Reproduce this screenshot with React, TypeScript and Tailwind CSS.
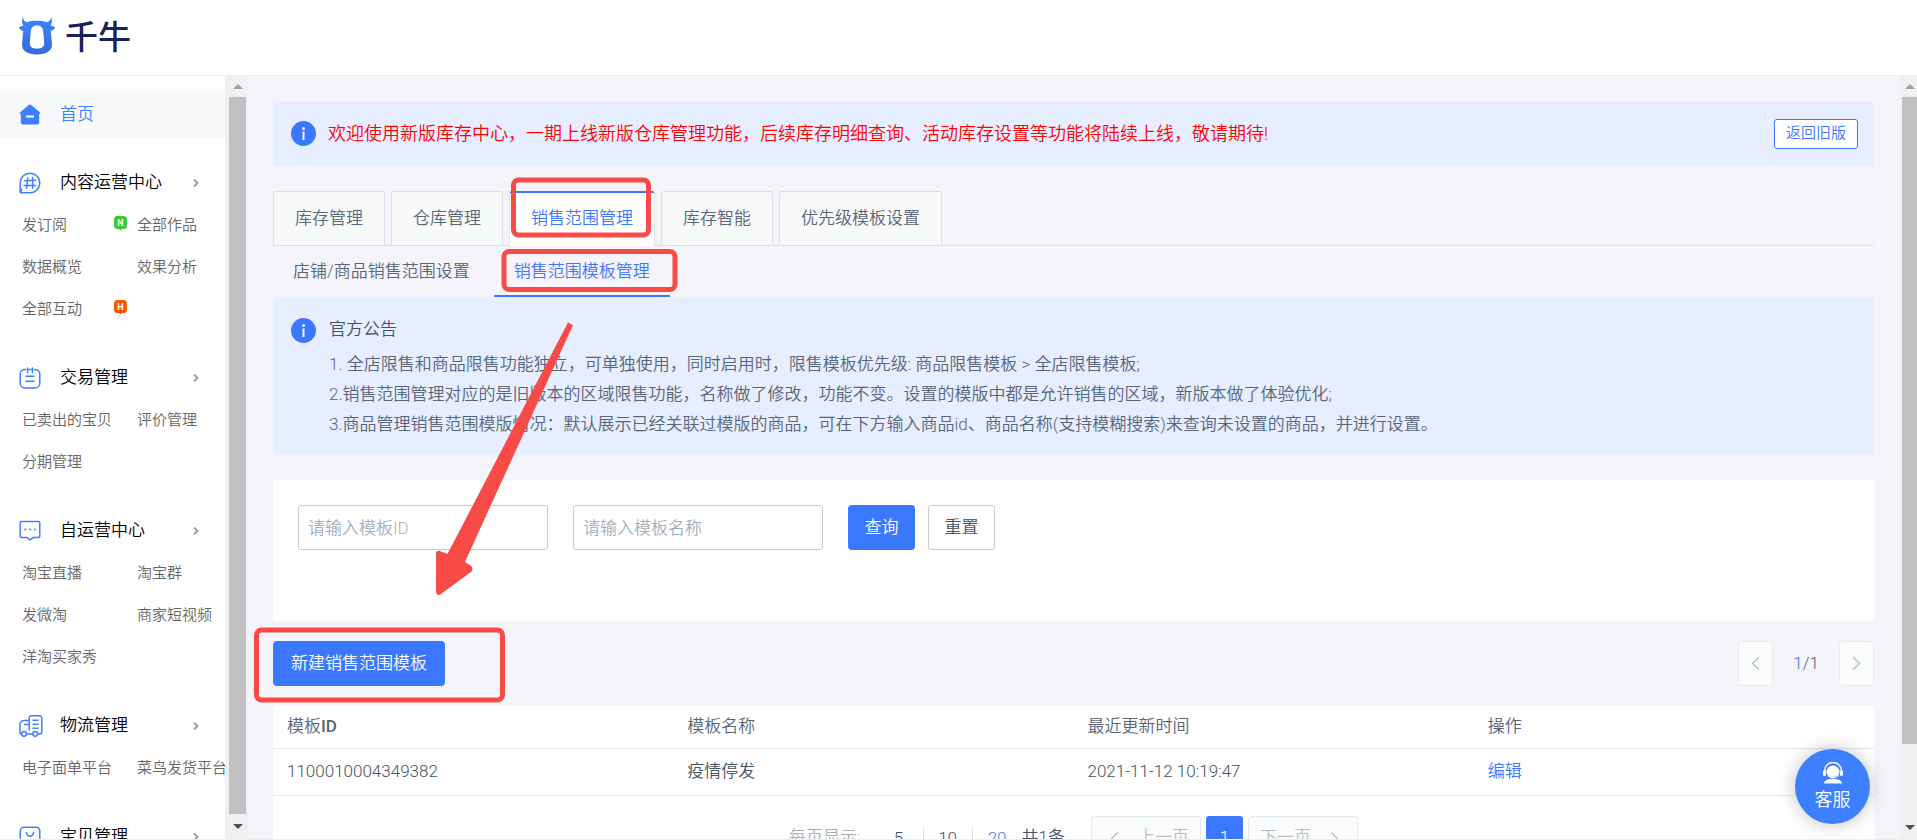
import React, { useState } from "react";
import { ChevronLeft, ChevronRight } from "lucide-react";

type Badge = "N" | "H";

interface MenuLink {
    label: string;
    badge?: Badge;
}

interface MenuGroup {
    title: string;
    icon: React.ReactNode;
    links: MenuLink[];
}

const iconProps = {
    width: 22,
    height: 22,
    viewBox: "0 0 22 22",
    fill: "none",
    stroke: "#3d7fff",
    strokeWidth: 1.5,
    strokeLinecap: "round" as const,
    strokeLinejoin: "round" as const,
    "aria-hidden": true
};

const HashIcon = () => (
    <svg {...iconProps}>
        <path d="M1.2 20.6V11A9.8 9.8 0 1 1 11 20.8H3.2c-1 0-1.6-.4-1.2-1.4l.8-2.2" />
        <path d="M8.8 6 7.6 16.2M13.6 5.6V16.2M5.4 8.8l11.2-.6M5 13.4h11.6" />
    </svg>
);

const OrderIcon = () => (
    <svg {...iconProps}>
        <path d="M6.6 2.4H6A4.8 4.8 0 0 0 1.2 7.2v9A4.8 4.8 0 0 0 6 21h10a4.8 4.8 0 0 0 4.8-4.8v-9A4.8 4.8 0 0 0 16 2.4h-.6M8.6 1v4.6M13.4 1v4.6M10.2 2.4h1.6M7 9.2h8M7 14.2h8" />
    </svg>
);

const ChatIcon = () => (
    <svg {...iconProps}>
        <path d="M3 1.6h16a1.8 1.8 0 0 1 1.8 1.8v12.4a1.8 1.8 0 0 1-1.8 1.8h-5l-3 2.4-3-2.4H3a1.8 1.8 0 0 1-1.8-1.8V3.4A1.8 1.8 0 0 1 3 1.6Z" />
        <path d="M6.2 9.6h.1M11 9.6h.1M15.8 9.6h.1" strokeWidth="2" />
    </svg>
);

const TruckIcon = () => (
    <svg {...iconProps} width={24} viewBox="0 0 24 22">
        <path d="M2.4 19H2a1 1 0 0 1-1-1v-8.4a4 4 0 0 1 4-4h5.2M7.6 19h6M10.2 15V3a2.2 2.2 0 0 1 2.2-2.2h8.2A2.2 2.2 0 0 1 22.8 3v13.8A2.2 2.2 0 0 1 20.6 19h-1.4M5.6 9.6h4.6" />
        <path d="M14 5.2h5M14 9.2h5M14 13.2h5" />
        <circle cx="5" cy="18.8" r="2.4" />
        <circle cx="16.2" cy="18.8" r="2.4" />
    </svg>
);

const GoodsIcon = () => (
    <svg {...iconProps}>
        <rect x="1.2" y="1.2" width="19.6" height="19.6" rx="4" />
        <path d="M7.4 6.4c.4 2.4 1.8 3.8 3.6 3.8s3.2-1.4 3.6-3.8" />
    </svg>
);

const HomeIcon = () => (
    <svg width="22" height="22" viewBox="0 0 22 22" aria-hidden="true">
        <path
            d="M10 .8a1.700 1.700 0 0 1 2 0l8.800 7.400c.9.800.4 1.800-.6 1.800v8.600c0 1-.8 1.800-1.800 1.800H3.600c-1 0-1.800-.8-1.800-1.800V10c-1 0-1.500-1-.6-1.800L10 .8Z"
            fill="#3d7fff"
        />
        <path d="M7 12.500h8" stroke="#fff" strokeWidth="2" />
    </svg>
);

const menuGroups: MenuGroup[] = [
    {
        title: "内容运营中心",
        icon: <HashIcon />,
        links: [
            { label: "发订阅", badge: "N" },
            { label: "全部作品" },
            { label: "数据概览" },
            { label: "效果分析" },
            { label: "全部互动", badge: "H" }
        ]
    },
    {
        title: "交易管理",
        icon: <OrderIcon />,
        links: [{ label: "已卖出的宝贝" }, { label: "评价管理" }, { label: "分期管理" }]
    },
    {
        title: "自运营中心",
        icon: <ChatIcon />,
        links: [
            { label: "淘宝直播" },
            { label: "淘宝群" },
            { label: "发微淘" },
            { label: "商家短视频" },
            { label: "洋淘买家秀" }
        ]
    },
    {
        title: "物流管理",
        icon: <TruckIcon />,
        links: [{ label: "电子面单平台" }, { label: "菜鸟发货平台" }]
    },
    {
        title: "宝贝管理",
        icon: <GoodsIcon />,
        links: []
    }
];

const mainTabs = ["库存管理", "仓库管理", "销售范围管理", "库存智能", "优先级模板设置"];
const subTabs = ["店铺/商品销售范围设置", "销售范围模板管理"];

const rows = [{ id: "1100010004349382", name: "疫情停发", updated: "2021-11-12 10:19:47" }];

const Logo = () => (
    <a href="#" className="flex items-center gap-[10px] pl-[19px]">
        <svg width="36" height="38" viewBox="0 0 36 38" aria-hidden="true">
            <defs>
                <linearGradient id="ox" x1="0" y1="0" x2="0" y2="1">
                    <stop offset="0" stopColor="#3d86ff" />
                    <stop offset="1" stopColor="#356bdc" />
                </linearGradient>
            </defs>
            <path
                fill="url(#ox)"
                fillRule="evenodd"
                d="M4 0c.2 3 1.600 4.600 4 5.200C11 4.200 14 3.800 18 3.800s7 .4 10 1.400c2.400-.6 3.800-2.200 4-5.200 1.400 3 1.400 5.800-.4 8.400L36 10c-.6 2.400-2 3.600-4.200 3.800L33 28c0 5.600-5.600 9.400-15 9.400S3 33.600 3 28l1.200-14.200C2 13.600.6 12.400 0 10l4.400-1.600C2.600 5.800 2.600 3 4 0Zm14 8.400c-3.600 0-5.800 2-6.200 5.800L10.800 26c-.2 4 2.600 5.600 7.200 5.600s7.400-1.600 7.200-5.600l-1-11.800c-.4-3.800-2.600-5.800-6.200-5.800Z"
            />
        </svg>
        <span className="pt-1 text-[33px] leading-[38px] font-medium text-[#16215a]">千牛</span>
    </a>
);

const MenuBadge = ({ kind }: { kind: Badge }) => (
    <svg width="13" height="15" viewBox="0 0 13 15" className="mr-[10px] -mt-1 shrink-0" role="img">
        <path
            d="M3.500 0h6A3.500 3.500 0 0 1 13 3.500v6A3.500 3.500 0 0 1 9.500 13H8l-1.500 1.500L5 13H3.500A3.500 3.500 0 0 1 0 9.500v-6A3.500 3.500 0 0 1 3.500 0Z"
            fill={kind === "N" ? "#33cc33" : "#ff5500"}
        />
        <text x="6.500" y="10" fontSize="9" fontWeight="700" textAnchor="middle" fill="#fff">
            {kind}
        </text>
    </svg>
);

const InfoIcon = () => (
    <svg width="25" height="25" viewBox="0 0 25 25" className="shrink-0" aria-hidden="true">
        <circle cx="12.500" cy="12.500" r="12.500" fill="#3b77ff" />
        <circle cx="12.500" cy="7.500" r="1.500" fill="#fff" />
        <path d="M12.500 10.500v8.500" stroke="#fff" strokeWidth="2" />
    </svg>
);

const Scrollbar = ({ side }: { side: "menu" | "page" }) => (
    <div
        aria-hidden="true"
        className={
            side === "menu"
                ? "flex w-[23px] shrink-0 flex-col bg-[#f0f0f0] pr-[2px] pl-1"
                : "flex w-[17px] shrink-0 flex-col bg-[#f0f0f0] pl-[2px]"
        }
    >
        <div className="flex h-[21px] shrink-0 items-center justify-center">
            <svg width="10" height="5" viewBox="0 0 10 5">
                <path d="M0 5 5 0l5 5Z" fill="#a3a3a3" />
            </svg>
        </div>
        <div className={side === "menu" ? "flex-1 bg-[#c1c1c1]" : "basis-[90%] bg-[#c1c1c1]"} />
        <div
            className={
                side === "menu"
                    ? "flex h-[25px] shrink-0 items-center justify-center"
                    : "flex h-[95px] shrink-0 items-end justify-center pb-[9px]"
            }
        >
            <svg width="10" height="5" viewBox="0 0 10 5">
                <path d="M0 0h10L5 5Z" fill="#505050" />
            </svg>
        </div>
    </div>
);

const Sidebar = () => (
    <nav className="w-[225px] shrink-0 overflow-hidden bg-white pt-[15px]">
        <a href="#" className="flex h-[47px] items-center bg-[#f7f9fb] pl-[19px] text-[#3d7fff]">
            <span className="w-[41px]">
                <HomeIcon />
            </span>
            首页
        </a>

        <div className="mt-6 flex flex-col gap-[27px]">
            {menuGroups.map((group) => (
                <section key={group.title}>
                    <h2 className="flex h-[42px] items-center pr-[26px] pl-[19px] text-black">
                        <span className="w-[41px]">{group.icon}</span>
                        <span className="flex-1">{group.title}</span>
                        <svg width="6" height="8" viewBox="0 0 6 8" fill="none" aria-hidden="true">
                            <path d="m1 0.500 3.500 3.500L1 7.500" stroke="#999" strokeWidth="1.800" />
                        </svg>
                    </h2>
                    <ul className="grid grid-cols-[115px_115px] pl-[22px]">
                        {group.links.map((link) => (
                            <li key={link.label} className="flex h-[42px] items-center justify-between">
                                <a href="#" className="text-[15px] whitespace-nowrap text-[#666]">
                                    {link.label}
                                </a>
                                {link.badge && <MenuBadge kind={link.badge} />}
                            </li>
                        ))}
                    </ul>
                </section>
            ))}
        </div>
    </nav>
);

const PagerArrow = ({ dir }: { dir: "prev" | "next" }) => (
    <button
        disabled
        aria-label={dir === "prev" ? "上一页" : "下一页"}
        className="flex h-[45px] w-[35px] items-center justify-center rounded-sm border border-[#e8eaf1] bg-[#fafcfb] text-[#b4bfcc]"
    >
        {dir === "prev" ? <ChevronLeft size={23} strokeWidth={1.5} /> : <ChevronRight size={23} strokeWidth={1.5} />}
    </button>
);

// Red marks that walk the reader through the three steps
const Annotations = () => (
    <svg width="700" height="720" viewBox="0 0 700 720" className="pointer-events-none absolute top-0 left-0" aria-hidden="true">
        <g fill="none" stroke="#f84b48" strokeWidth="5">
            <rect x="513.500" y="180" width="135" height="55" rx="5" />
            <rect x="504" y="251.500" width="171" height="38" rx="5" />
            <rect x="256.500" y="630" width="246" height="70" rx="5" />
        </g>
        <path
            d="M568 322.500 573 325 465 562l5.500 3.500c2.500 1.500 2.500 5 .5 6.500L441 594c-2.500 2-5 .5-5-2.500V554c0-3 2-4 4.500-2.800l7 2.800Z"
            fill="#f84b48"
        />
    </svg>
);

export default function App() {
    const [tab, setTab] = useState(2);
    const [subTab, setSubTab] = useState(1);
    const [templateId, setTemplateId] = useState("");
    const [templateName, setTemplateName] = useState("");

    const handleReset = () => {
        setTemplateId("");
        setTemplateName("");
    };

    return (
        <div className="relative flex h-screen flex-col overflow-hidden border-b border-[#ededed] bg-white font-['Roboto','Noto_Sans_CJK_SC',sans-serif] text-[17px] font-[350] text-[#586679]">
            {/* Header */}
            <header className="flex h-[76px] shrink-0 items-center border-b border-[#ebebeb] pb-1">
                <Logo />
            </header>

            <div className="flex min-h-0 flex-1">
                <Sidebar />
                <Scrollbar side="menu" />

                <main className="flex min-w-0 flex-1 flex-col overflow-hidden bg-[#f5f4fa] pt-[25px] pr-[26px] pl-[25px]">
                    {/* Upgrade notice */}
                    <div className="flex h-[65px] shrink-0 items-center rounded-sm bg-[#e7eeff] pr-4 pl-[18px]">
                        <InfoIcon />
                        <p className="flex-1 pl-3 text-lg text-[#f00]">
                            欢迎使用新版库存中心，一期上线新版仓库管理功能，后续库存明细查询、活动库存设置等功能将陆续上线，敬请期待!
                        </p>
                        <button className="h-[30px] rounded-[3px] border border-[#3b77ff] bg-white px-[11px] text-[15px] text-[#3b77ff]">
                            返回旧版
                        </button>
                    </div>

                    {/* Main tabs */}
                    <div role="tablist" className="mt-[25px] flex h-[55px] shrink-0 gap-[6px] border-b border-[#dddfe6]">
                        {mainTabs.map((label, i) => (
                            <button
                                key={label}
                                role="tab"
                                aria-selected={tab === i}
                                onClick={() => setTab(i)}
                                className={
                                    tab === i
                                        ? "-mb-px rounded-t-[3px] border-x border-t-2 border-x-[#e3e4ea] border-t-[#3b77ff] bg-white px-[21px] pb-[2px] text-[#3b77ff]"
                                        : "rounded-t-[3px] border border-b-0 border-[#dddfe6] bg-[#f8f9f9] px-[21px]"
                                }
                            >
                                {label}
                            </button>
                        ))}
                    </div>

                    {/* Sub tabs */}
                    <div role="tablist" className="flex h-[51px] shrink-0 gap-1">
                        {subTabs.map((label, i) => (
                            <button
                                key={label}
                                role="tab"
                                aria-selected={subTab === i}
                                onClick={() => setSubTab(i)}
                                className={
                                    subTab === i
                                        ? "border-b-2 border-[#3b77ff] px-5 pt-[2px] text-[#3b77ff]"
                                        : "border-b-2 border-transparent px-5 pt-[2px]"
                                }
                            >
                                {label}
                            </button>
                        ))}
                    </div>

                    {/* Announcement */}
                    <div className="flex shrink-0 items-start rounded-sm bg-[#e7eeff] pt-[17px] pb-4 pl-[18px]">
                        <div className="pt-1">
                            <InfoIcon />
                        </div>
                        <div className="pl-[13px] leading-[30px]">
                            <h3 className="mb-[5px] text-[#455366]">官方公告</h3>
                            <p>1. 全店限售和商品限售功能独立，可单独使用，同时启用时，限售模板优先级: 商品限售模板 &gt; 全店限售模板;</p>
                            <p>2.销售范围管理对应的是旧版本的区域限售功能，名称做了修改，功能不变。设置的模版中都是允许销售的区域，新版本做了体验优化;</p>
                            <p>3.商品管理销售范围模版情况：默认展示已经关联过模版的商品，可在下方输入商品id、商品名称(支持模糊搜索)来查询未设置的商品，并进行设置。</p>
                        </div>
                    </div>

                    {/* Search */}
                    <form
                        onSubmit={(e) => e.preventDefault()}
                        className="mt-[25px] flex h-[141px] shrink-0 items-start bg-white px-[25px] pt-[25px]"
                    >
                        <input
                            type="text"
                            aria-label="模板ID"
                            value={templateId}
                            onChange={(e) => setTemplateId(e.target.value)}
                            placeholder="请输入模板ID"
                            className="h-[45px] w-[250px] rounded-[3px] border border-[#c3ccd6] px-[9px] placeholder:text-[#a3b0bf]"
                        />
                        <input
                            type="text"
                            aria-label="模板名称"
                            value={templateName}
                            onChange={(e) => setTemplateName(e.target.value)}
                            placeholder="请输入模板名称"
                            className="ml-[25px] h-[45px] w-[250px] rounded-[3px] border border-[#c3ccd6] px-[9px] placeholder:text-[#a3b0bf]"
                        />
                        <button type="submit" className="ml-[25px] h-[45px] w-[67px] rounded-sm bg-[#3b77ff] text-white">
                            查询
                        </button>
                        <button
                            type="button"
                            onClick={handleReset}
                            className="ml-[13px] h-[45px] w-[67px] rounded-[3px] border border-[#c3ccd6] bg-white text-[#455366]"
                        >
                            重置
                        </button>
                    </form>

                    {/* Toolbar */}
                    <div className="flex shrink-0 items-center justify-between py-5">
                        <button className="h-[45px] w-[172px] rounded-sm bg-[#3b77ff] text-white">新建销售范围模板</button>
                        <div className="flex items-center">
                            <PagerArrow dir="prev" />
                            <span className="w-[66px] text-center">
                                <span className="text-[#3b77ff]">1</span>/1
                            </span>
                            <PagerArrow dir="next" />
                        </div>
                    </div>

                    {/* Template list */}
                    <div className="flex-1 bg-white">
                        <table className="w-full table-fixed text-left">
                            <thead>
                                <tr className="h-[42px] border-b border-[#e6e8f0]">
                                    <th className="px-[14px] font-[350]">
                                        模板<span className="font-medium">ID</span>
                                    </th>
                                    <th className="px-[14px] font-[350]">模板名称</th>
                                    <th className="px-[14px] font-[350]">最近更新时间</th>
                                    <th className="px-[14px] font-[350]">操作</th>
                                </tr>
                            </thead>
                            <tbody className="text-[#455366]">
                                {rows.map((row) => (
                                    <tr key={row.id} className="h-[47px] border-b border-[#e6e8f0]">
                                        <td className="px-[14px]">{row.id}</td>
                                        <td className="px-[14px]">{row.name}</td>
                                        <td className="px-[14px]">{row.updated}</td>
                                        <td className="px-[14px]">
                                            <a href="#" className="text-[#3b77ff]">
                                                编辑
                                            </a>
                                        </td>
                                    </tr>
                                ))}
                            </tbody>
                        </table>

                        <div className="flex h-[85px] items-center justify-center text-[#455366]">
                            <span className="pr-[14px] text-[#a3b0bf]">每页显示:</span>
                            <button className="h-5 w-[49px] border-r border-[#dddfe6] leading-5">5</button>
                            <button className="h-5 w-[49px] border-r border-[#dddfe6] leading-5">10</button>
                            <button className="h-5 w-[49px] leading-5 text-[#3b77ff]">20</button>
                            <span className="pr-[26px]">共1条</span>
                            <button
                                disabled
                                className="flex h-[45px] w-[110px] items-center justify-center gap-3 rounded-[3px] border border-[#e6e8f0] bg-[#fafcfb] text-[#b4bfcc]"
                            >
                                <ChevronLeft size={23} strokeWidth={1.5} />
                                上一页
                            </button>
                            <button className="mx-[5px] h-[45px] w-[37px] rounded-[3px] bg-[#3b77ff] text-white">1</button>
                            <button
                                disabled
                                className="flex h-[45px] w-[110px] items-center justify-center gap-3 rounded-[3px] border border-[#e6e8f0] bg-[#fafcfb] text-[#b4bfcc]"
                            >
                                下一页
                                <ChevronRight size={23} strokeWidth={1.5} />
                            </button>
                        </div>
                    </div>
                </main>

                <Scrollbar side="page" />
            </div>

            {/* Support button */}
            <button className="absolute right-[47px] bottom-[15px] flex size-[75px] flex-col items-center justify-center rounded-full bg-[#3d7fff] text-lg leading-6 text-white shadow-[0_0_18px_rgba(0,0,0,0.25)]">
                <svg width="20" height="22" viewBox="0 0 20 22" className="mb-1" aria-hidden="true">
                    <path d="M1.500 10V9a8.500 8.500 0 0 1 17 0v1" fill="none" stroke="#fff" strokeWidth="1.500" />
                    <rect x="0" y="8" width="3" height="6" rx="1.500" fill="#fff" />
                    <rect x="17" y="8" width="3" height="6" rx="1.500" fill="#fff" />
                    <circle cx="10" cy="10" r="6.500" fill="#fff" />
                    <path d="M18 13c-1 1.500-3.500 1.500-7 1.300" fill="none" stroke="#9dbfff" strokeWidth="1" />
                    <path d="M1 21.500c.4-3 3-4 6-4.500h6c3 .5 5.600 1.500 6 4.500Z" fill="#fff" />
                </svg>
                客服
            </button>

            <Annotations />
        </div>
    );
}
